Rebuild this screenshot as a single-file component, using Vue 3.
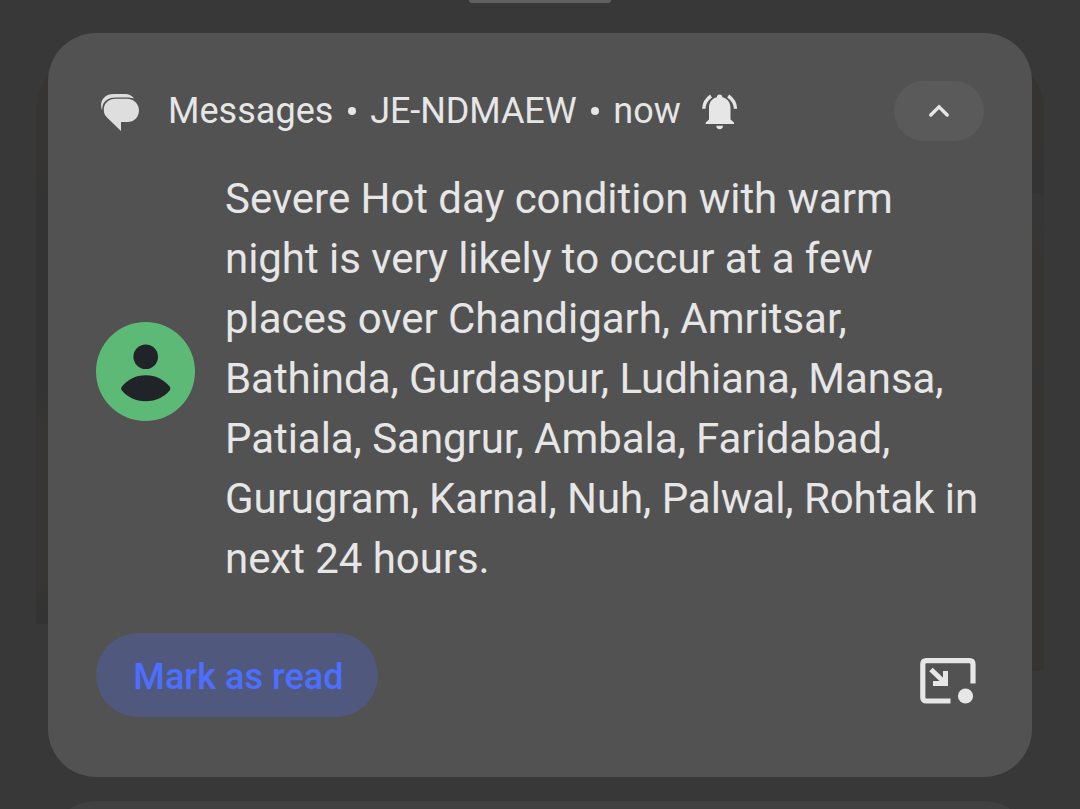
<script setup>
import {ref} from 'vue';

const app = ref('Messages')
const sender = ref('JE-NDMAEW')
const time = ref('now')

const lines = [
  'Severe Hot day condition with warm',
  'night is very likely to occur at a few',
  'places over Chandigarh, Amritsar,',
  'Bathinda, Gurdaspur, Ludhiana, Mansa,',
  'Patiala, Sangrur, Ambala, Faridabad,',
  'Gurugram, Karnal, Nuh, Palwal, Rohtak in',
  'next 24 hours.',
]
</script>

<template>
  <div class="shade">
    <div class="backdrop"></div>
    <div class="backdrop right"></div>
    <div class="handle"></div>

    <div class="card">
      <div class="header">
        <svg class="app-icon" width="40" height="40" viewBox="0 0 40 40">
          <path d="M2 17C.5 13 .8 8 3.800 5C6.500 1.800 10 1 14 1H25C29 1 32 2.500 34 5.600C31 4.600 29 4.500 26 4.500H15.500C9 4.500 4 7.500 2.600 13Z" fill="#dedede" />
          <path d="M15.500 5.700H27C34 5.700 39 11 39 17.300C39 23.500 34.500 28.900 28.500 28.900H21V38L7.500 25C4.700 22.500 3.800 20 3.800 16.500C3.800 10 9 5.700 15.500 5.700Z" fill="#dedede" />
        </svg>
        <div class="title">
          <span class="app">{{ app }}</span>
          <span class="dot"></span>
          <span class="sender">{{ sender }}</span>
          <span class="dot"></span>
          <span class="time">{{ time }}</span>
        </div>
        <svg class="bell" width="36" height="36" viewBox="0 0 36 36" fill="#e6e6e6">
          <path d="M14.900 3.200C14.900 1.200 16 .4 17.600 .4S20.300 1.200 20.300 3.200C25.600 4.500 28.500 8.600 28.500 14V25.500L32 28.500V30H3.700V28.500L7 25.500V14C7 8.600 9.700 4.500 14.900 3.200Z" />
          <path d="M14.300 31.800H21C21 33.800 19.600 35.200 17.600 35.200S14.300 33.800 14.300 31.800Z" />
          <path d="M9 2C4.500 5.200 2 9.300 1.800 14.800M26.200 2C30.700 5.200 33.300 9.300 33.500 14.800" fill="none" stroke="#e6e6e6" stroke-width="3.400" />
        </svg>
        <button class="collapse">
          <svg width="22" height="14" viewBox="0 0 22 14">
            <path d="M2.800 11L11 2.900L19.200 11" fill="none" stroke="#e6e6e6" stroke-width="3.400" stroke-linecap="round" />
          </svg>
        </button>
      </div>

      <div class="content">
        <svg class="avatar" width="99" height="99" viewBox="0 0 99 99">
          <circle cx="49.500" cy="49.500" r="49.500" fill="#5dba76" />
          <circle cx="49.700" cy="34.700" r="12.300" fill="#202327" />
          <path d="M25.500 65C31 58 39.500 53.300 49.700 53.300S68.500 58 74 65Q74.600 66.500 74 68C68.500 75 60 79.200 49.700 79.200S31 75 25.500 68Q24.900 66.500 25.500 65Z" fill="#202327" />
        </svg>
        <div class="message">
          <div v-for="line in lines" :key="line">{{ line }}</div>
        </div>
      </div>

      <div class="actions">
        <button class="read">Mark as read</button>
        <svg class="popup" width="56" height="46" viewBox="0 0 56 46">
          <path d="M30.500 43H6.300Q2.800 43 2.800 39.500V6.200Q2.800 2.700 6.300 2.700H49.500Q53 2.700 53 6.200V25.500" fill="none" stroke="#e6e6e6" stroke-width="5.200" />
          <path d="M11 11.500L23 23" fill="none" stroke="#e6e6e6" stroke-width="5" />
          <path d="M23 13H28V28H13V23H23Z" fill="#e6e6e6" />
          <circle cx="45.500" cy="38" r="7.600" fill="#e6e6e6" />
        </svg>
      </div>
    </div>

    <div class="next"></div>
  </div>
</template>

<style>
body{
  background: #383838;
}
</style>

<style scoped>
.shade{
  position: relative;
  box-sizing: border-box;
  width: 1080px;
  height: 809px;
  overflow: hidden;
  padding: 0 48px;
  background: #383838;
  font-family: Roboto, sans-serif;
  color: #e6e6e6;
}

/* dimmed content behind the notification */
.backdrop{
  position: absolute;
  left: 36px;
  top: 60px;
  width: 500px;
  height: 564px;
  border-radius: 48px 0 0 0;
  background: linear-gradient(#363533 0 90px, #333 140px 330px, #373633 370px 520px, #333 550px);
}

.backdrop.right{
  left: 536px;
  width: 508px;
  height: 611px;
  border-radius: 0 48px 0 0;
  background: linear-gradient(#363431 0 80px, #333 110px 132px, #363636 134px 160px, #363532 200px 300px, #333434 320px, #363431 326px);
}

.handle{
  width: 142px;
  height: 3px;
  margin: 0 auto 30px;
  border-radius: 0 0 3px 3px;
  background: #606060;
}

.card{
  position: relative;
  box-sizing: border-box;
  height: 744px;
  padding: 48px;
  border-radius: 48px;
  background: #525252;
}

.header{
  display: flex;
  align-items: center;
  height: 60px;
}

.app-icon{
  margin: 4px 0 0 4px;
}

.title{
  display: flex;
  align-items: center;
  margin-left: 28px;
  font-size: 36px;
  line-height: 60px;
  white-space: nowrap;
  letter-spacing: 0.04px;
}

.sender{
  letter-spacing: -0.1px;
}

.dot{
  width: 8px;
  height: 8px;
  margin: 0 14.400px;
  border-radius: 50%;
  background: #e6e6e6;
}

.bell{
  margin: 2px 0 0 21.500px;
}

button{
  border: 0;
  padding: 0;
  font-family: inherit;
}

.collapse{
  display: flex;
  align-items: center;
  justify-content: center;
  width: 90px;
  height: 60px;
  margin-left: auto;
  border-radius: 30px;
  background: #5a5a5a;
}

.content{
  display: flex;
  align-items: center;
  margin-top: 28px;
}

.avatar{
  flex: none;
  margin-top: -15px;
}

.message{
  margin-left: 30px;
  font-size: 42px;
  line-height: 60px;
  white-space: nowrap;
  letter-spacing: -0.05px;
}

.actions{
  display: flex;
  align-items: center;
  justify-content: space-between;
  margin-top: 44px;
}

.read{
  box-sizing: border-box;
  width: 282px;
  height: 84px;
  padding: 4px 0 0 3px;
  border-radius: 42px;
  background: #50597d;
  color: #4c6fff;
  font-size: 36px;
  font-weight: 500;
  letter-spacing: 0.06px;
}

.popup{
  margin: 12px 8px 0 0;
}

.next{
  position: relative;
  height: 60px;
  margin-top: 24px;
  border-radius: 48px 48px 0 0;
  background: #404040;
}
</style>
